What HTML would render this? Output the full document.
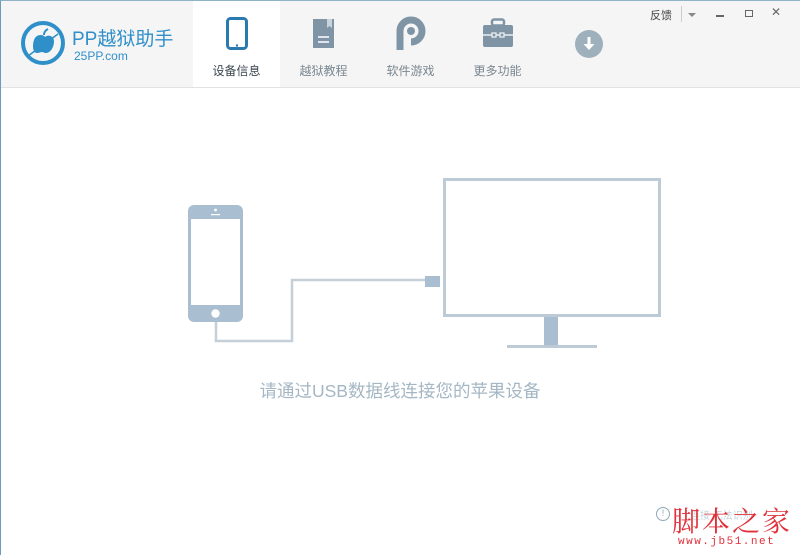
<!DOCTYPE html>
<html><head><meta charset="utf-8"><style>
*{margin:0;padding:0;box-sizing:border-box}
body{width:800px;height:555px;overflow:hidden;background:#fff;font-family:"Liberation Sans","Noto Sans CJK SC",sans-serif;position:relative}
.frame{position:absolute;left:0;top:0;width:800px;height:555px;border-left:1px solid #6d9cb8;border-top:1px solid #8fb3c8}
.hdr{position:absolute;left:0;top:0;width:800px;height:88px;background:#f5f5f5;border-bottom:1px solid #e2e2e2}
.tab{position:absolute;top:0;height:87px;width:87px;text-align:center;font-size:12px;color:#7a8791}
.tab .lbl{position:absolute;top:62px;left:0;width:100%}
.tab.act{background:#fff;color:#3a4650}
.abs{position:absolute}
</style></head><body>
<div class="hdr">
  <svg class="abs" style="left:20px;top:20px" width="46" height="46" viewBox="0 0 46 46">
    <circle cx="23" cy="23" r="20" fill="none" stroke="#2f8fc9" stroke-width="4"/>
    <path d="M14 20c2-6 9-6 11-3 3-3 9-1 9 4 0 7-4 12-8 12-2 0-3-1-4-1s-3 1-5 1c-4 0-5-7-3-13z" fill="#2f8fc9"/>
    <path d="M24 15c0-3 2-5 4-6" stroke="#2f8fc9" stroke-width="2" fill="none"/>
    <path d="M8 36l30-22" stroke="#2f8fc9" stroke-width="1.5"/>
  </svg>
  <div class="abs" style="left:72px;top:24px;font-size:19px;color:#2f8fc9;letter-spacing:0">PP越狱助手</div>
  <div class="abs" style="left:74px;top:49px;font-size:12px;color:#2f8fc9">25PP.com</div>

  <div class="tab act" style="left:193px">
    <svg class="abs" style="left:33px;top:17px" width="22" height="33" viewBox="0 0 22 33"><rect x="1.5" y="1.5" width="19" height="30" rx="3" fill="none" stroke="#2a7ab0" stroke-width="3"/><rect x="3" y="5" width="16" height="21" fill="#fff"/><circle cx="11" cy="28.5" r="1.2" fill="#2a7ab0"/></svg>
    <div class="lbl">设备信息</div></div>
  <div class="tab" style="left:280px">
    <svg class="abs" style="left:31px;top:17px" width="25" height="33" viewBox="0 0 25 33"><rect x="2" y="2" width="21" height="29" fill="#7f95a6"/><path d="M16 2v9l2.5-2 2.5 2V2z" fill="#c9d3da"/><rect x="7" y="19" width="11" height="2" fill="#dfe5ea"/><rect x="7" y="24" width="11" height="2" fill="#dfe5ea"/></svg>
    <div class="lbl">越狱教程</div></div>
  <div class="tab" style="left:367px">
    <svg class="abs" style="left:29px;top:16px" width="30" height="34" viewBox="0 0 30 34"><path d="M4 34V15a11 11 0 1 1 11 11" fill="none" stroke="#7f95a6" stroke-width="7"/><circle cx="15" cy="15" r="4" fill="#7f95a6"/></svg>
    <div class="lbl">软件游戏</div></div>
  <div class="tab" style="left:454px">
    <svg class="abs" style="left:29px;top:18px" width="30" height="30" viewBox="0 0 30 30"><rect x="9" y="1.5" width="12" height="6" rx="2" fill="none" stroke="#7f95a6" stroke-width="2.5"/><rect x="0" y="7" width="30" height="22" rx="2" fill="#7f95a6"/><path d="M0 17h9M13 17h4M21 17h9" stroke="#e9eef1" stroke-width="1.5"/><rect x="9" y="15" width="4" height="4" fill="none" stroke="#e9eef1" stroke-width="1.3"/><rect x="17" y="15" width="4" height="4" fill="none" stroke="#e9eef1" stroke-width="1.3"/></svg>
    <div class="lbl">更多功能</div></div>
  <svg class="abs" style="left:575px;top:30px" width="28" height="28" viewBox="0 0 28 28"><circle cx="14" cy="14" r="14" fill="#9fb0bd"/><path d="M14 7v10" stroke="#fff" stroke-width="3"/><path d="M8.5 14l5.5 6 5.5-6z" fill="#fff"/></svg>

  <div class="abs" style="left:650px;top:7px;font-size:11px;color:#444">反馈</div>
  <div class="abs" style="left:681px;top:6px;width:1px;height:16px;background:#ccc"></div>
  <div class="abs" style="left:688px;top:13px;width:0;height:0;border-left:4px solid transparent;border-right:4px solid transparent;border-top:4px solid #888"></div>
  <div class="abs" style="left:716px;top:15px;width:8px;height:1.5px;background:#666"></div>
  <div class="abs" style="left:745px;top:10px;width:8px;height:7px;border:1.5px solid #666"></div>
  <div class="abs" style="left:771px;top:5px;font-size:12px;color:#666">✕</div>
</div>

<svg class="abs" style="left:0;top:0" width="800" height="555">
  <rect x="188" y="205" width="55" height="117" rx="6" fill="#a9bfd1"/>
  <rect x="191" y="219" width="49" height="86" fill="#fff"/>
  <circle cx="215.5" cy="210" r="1.4" fill="#fff"/>
  <rect x="211" y="214" width="9" height="1.2" fill="#fff"/>
  <circle cx="215.5" cy="313.5" r="4.2" fill="#fff"/>
  <path d="M216 322V341H292V280H426" fill="none" stroke="#c4cfd7" stroke-width="2.5"/>
  <rect x="425" y="276" width="15" height="11" fill="#a9bfd1"/>
  <rect x="444.5" y="179.5" width="215" height="136" fill="none" stroke="#bccbd6" stroke-width="3"/>
  <rect x="544" y="317" width="14" height="30" fill="#a9bfd1"/>
  <rect x="507" y="345" width="90" height="3" fill="#bccbd6"/>
</svg>
<div class="abs" style="left:0;width:800px;top:378px;text-align:center;font-size:17.5px;color:#a5b7c4">请通过USB数据线连接您的苹果设备</div>

<div class="abs" style="left:656px;top:507px;width:14px;height:14px;border:1.5px solid #8fa8b8;border-radius:50%;font-size:9px;color:#8fa8b8;text-align:center;line-height:11px">!</div>
<div class="abs" style="left:690px;top:507px;font-size:10px;color:#9fb6c4;opacity:.6">连接 无法识别</div>
<div class="abs" style="left:672px;top:500px;font-size:28px;color:#e0303a;font-family:'Noto Serif CJK SC',serif;letter-spacing:2px">脚本之家</div>
<div class="abs" style="left:678px;top:536px;font-size:11px;color:#e0303a;letter-spacing:1.5px;font-family:'Liberation Mono',monospace">www.jb51.net</div>
<div class="frame"></div>
</body></html>
